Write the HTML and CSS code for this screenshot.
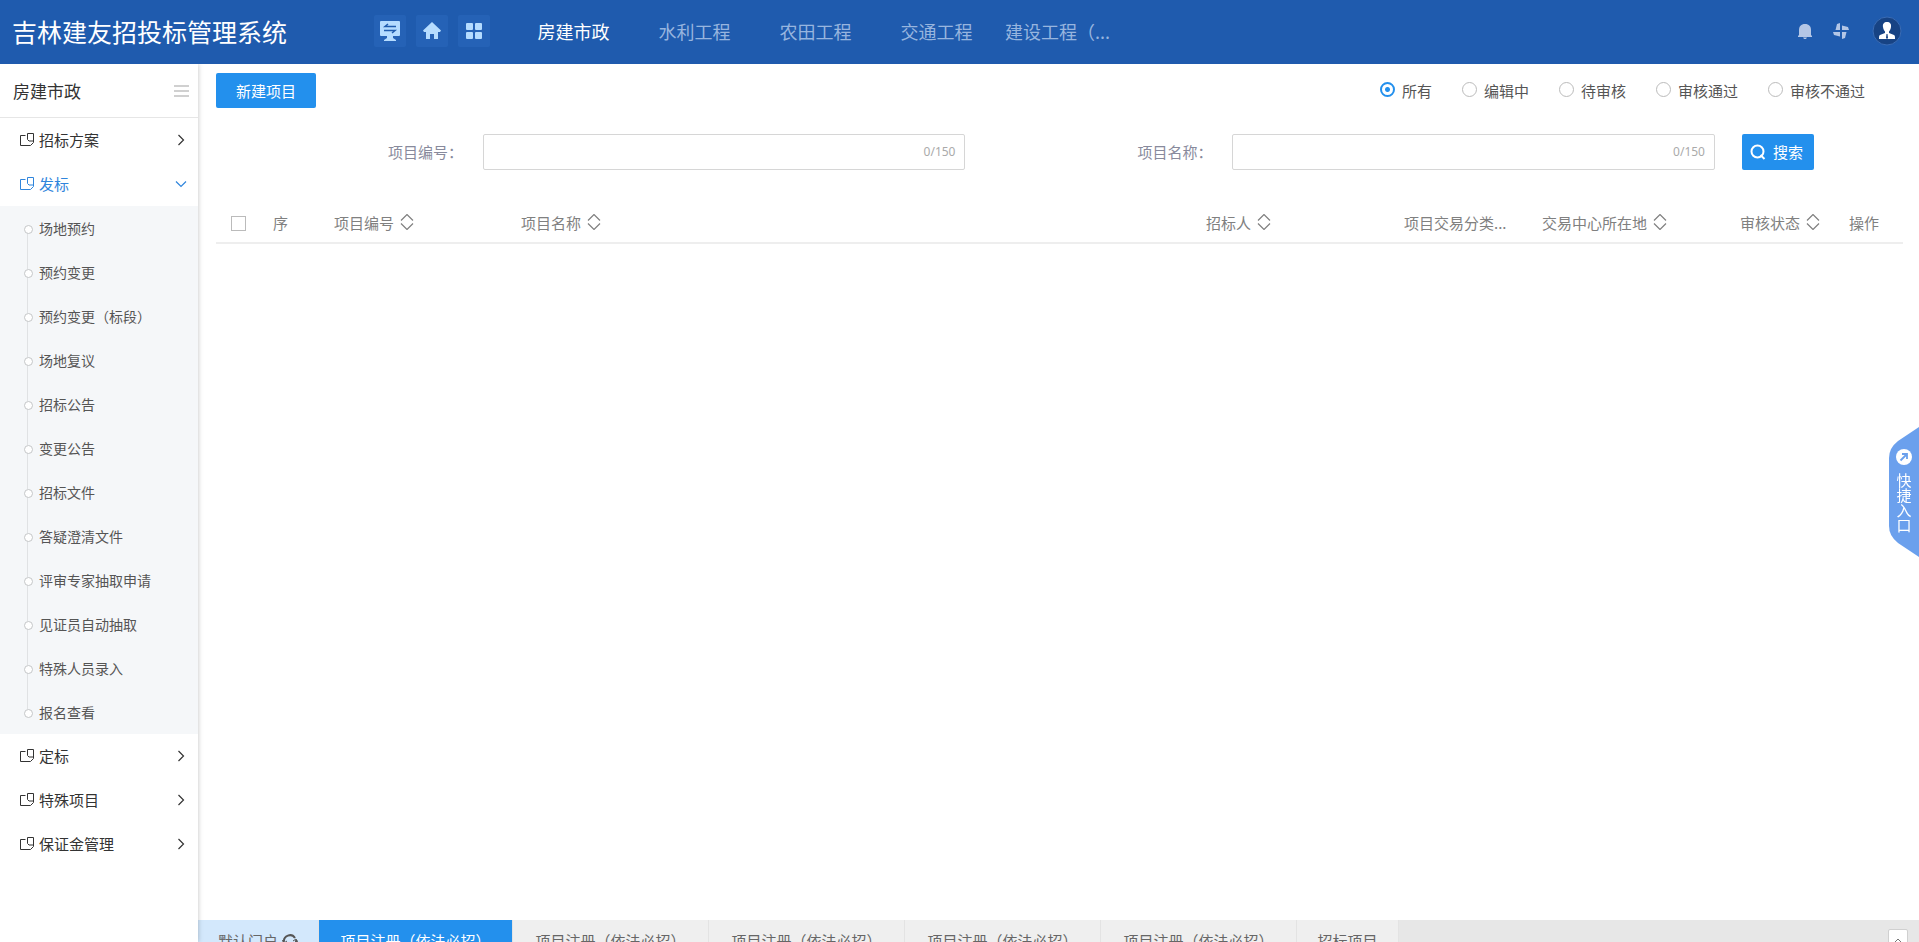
FILE: index.html
```html
<!DOCTYPE html>
<html lang="zh-CN">
<head>
    <meta charset="UTF-8">
    <meta name="viewport" content="width=device-width, initial-scale=1.0">
    <title>吉林建友招投标管理系统</title>
    <link rel="stylesheet" href="styles.css">
</head>
<body>

<!-- Shared icons -->
<svg class="sprite" aria-hidden="true">
    <symbol id="icon-module" viewBox="0 0 14 14">
        <path d="M5.500 2.500h-5v10h10l3-3v-9h-6v6L9 8h4" fill="none" stroke="currentColor"/>
    </symbol>
    <symbol id="icon-right" viewBox="0 0 14 14">
        <path d="M4.500 2l5 5-5 5" fill="none" stroke="currentColor" stroke-width="1.200"/>
    </symbol>
    <symbol id="icon-down" viewBox="0 0 14 14">
        <path d="M2 4.500l5 5 5-5" fill="none" stroke="currentColor" stroke-width="1.200"/>
    </symbol>
    <symbol id="icon-sort" viewBox="0 0 14 16">
        <path d="M1 6.500l6-6 6 6M1 9.500l6 6 6-6" fill="none" stroke="currentColor" stroke-width="1.200"/>
    </symbol>
</svg>

<header class="topbar">
    <h1 class="brand">吉林建友招投标管理系统</h1>
    <div class="quick">
        <button type="button" class="quick-btn" aria-label="桌面">
            <svg width="22" height="20" viewBox="0 0 22 20">
                <path d="M2 0h18a1 1 0 0 1 1 1v13a1 1 0 0 1-1 1H2a1 1 0 0 1-1-1V1a1 1 0 0 1 1-1z" fill="#b5dcff"/>
                <path d="M8 15h6v2l3 2v1H5v-1l3-2z" fill="#b5dcff"/>
                <path d="M17 5.500H6l3-2.500M5 9.500h11L13 12" fill="none" stroke="#1f5bae" stroke-width="1.500"/>
            </svg>
        </button>
        <button type="button" class="quick-btn" aria-label="首页">
            <svg width="18" height="18" viewBox="0 0 18 18">
                <path d="M9 0l9 8.500-1 1.500h-2v7h-4v-5H7v5H3v-7H1L0 8.500z" fill="#b5dcff"/>
            </svg>
        </button>
        <button type="button" class="quick-btn" aria-label="应用">
            <svg width="16" height="16" viewBox="0 0 16 16" fill="#b5dcff">
                <rect width="7" height="7" rx="1"/>
                <rect x="9" width="7" height="7" rx="1"/>
                <rect y="9" width="7" height="7" rx="1"/>
                <rect x="9" y="9" width="7" height="7" rx="1"/>
            </svg>
        </button>
    </div>
    <nav class="topnav">
        <a href="#" class="active">房建市政</a>
        <a href="#">水利工程</a>
        <a href="#">农田工程</a>
        <a href="#">交通工程</a>
        <a href="#">建设工程（...</a>
    </nav>
    <div class="tools">
        <button type="button" class="tool-btn" aria-label="消息">
            <svg width="14" height="15" viewBox="0 0 14 15">
                <path d="M7 0c4 0 6 2.500 6 6v5l1 1v1H0v-1l1-1V6c0-3.500 2-6 6-6zM5 13.500h4L8 15H6z" fill="#b3c6e6"/>
            </svg>
        </button>
        <button type="button" class="tool-btn" aria-label="主题">
            <svg width="16" height="16" viewBox="0 0 16 16" fill="#b3c6e6">
                <path d="M7 0v7H2.500L4 1zM9 2.500L15 4l1 3H9zM9 9h4.500L12 15l-3 1zM0 9h7v4.500L1 12z"/>
            </svg>
        </button>
        <button type="button" class="avatar" aria-label="用户">
            <svg width="30" height="30" viewBox="0 0 30 30">
                <circle cx="15" cy="15" r="14" fill="#174384" stroke="#3a6cb5"/>
                <path d="M15 6c3 0 4.500 2 4 5-.3 2-1.200 3.500-2 4.500v1.500l5 2c1 .5 1 1.500 1 4H7c0-2.500 0-3.500 1-4l5-2v-1.500c-.8-1-1.700-2.500-2-4.500-.5-3 1-5 4-5z" fill="#fff"/>
                <path d="M14.500 18h1l.5 4-1 1-1-1z" fill="#174384"/>
            </svg>
        </button>
    </div>
</header>

<div class="layout">
    <!-- Sidebar -->
    <aside class="sidebar">
        <div class="side-head">
            <h2>房建市政</h2>
            <button type="button" class="collapse" aria-label="收起菜单"><i></i><i></i><i></i></button>
        </div>
        <ul class="menu">
            <li><a href="#" class="menu-link"><svg class="icon"><use href="#icon-module"/></svg><span>招标方案</span><svg class="icon"><use href="#icon-right"/></svg></a></li>
            <li>
                <a href="#" class="menu-link open"><svg class="icon"><use href="#icon-module"/></svg><span>发标</span><svg class="icon"><use href="#icon-down"/></svg></a>
                <ul class="submenu">
                    <li><a href="#">场地预约</a></li>
                    <li><a href="#">预约变更</a></li>
                    <li><a href="#">预约变更（标段）</a></li>
                    <li><a href="#">场地复议</a></li>
                    <li><a href="#">招标公告</a></li>
                    <li><a href="#">变更公告</a></li>
                    <li><a href="#">招标文件</a></li>
                    <li><a href="#">答疑澄清文件</a></li>
                    <li><a href="#">评审专家抽取申请</a></li>
                    <li><a href="#">见证员自动抽取</a></li>
                    <li><a href="#">特殊人员录入</a></li>
                    <li><a href="#">报名查看</a></li>
                </ul>
            </li>
            <li><a href="#" class="menu-link"><svg class="icon"><use href="#icon-module"/></svg><span>定标</span><svg class="icon"><use href="#icon-right"/></svg></a></li>
            <li><a href="#" class="menu-link"><svg class="icon"><use href="#icon-module"/></svg><span>特殊项目</span><svg class="icon"><use href="#icon-right"/></svg></a></li>
            <li><a href="#" class="menu-link"><svg class="icon"><use href="#icon-module"/></svg><span>保证金管理</span><svg class="icon"><use href="#icon-right"/></svg></a></li>
        </ul>
    </aside>

    <div class="workspace">
        <main class="content">
            <div class="toolbar">
                <button type="button" class="btn">新建项目</button>
                <div class="filters">
                    <label><input type="radio" name="status" checked>所有</label>
                    <label><input type="radio" name="status">编辑中</label>
                    <label><input type="radio" name="status">待审核</label>
                    <label><input type="radio" name="status">审核通过</label>
                    <label><input type="radio" name="status">审核不通过</label>
                </div>
            </div>

            <!-- Search -->
            <form class="search">
                <div class="field">
                    <label for="projectNo">项目编号：</label>
                    <div class="box">
                        <input type="text" id="projectNo" maxlength="150">
                        <span>0/150</span>
                    </div>
                </div>
                <div class="field">
                    <label for="projectName">项目名称：</label>
                    <div class="box">
                        <input type="text" id="projectName" maxlength="150">
                        <span>0/150</span>
                    </div>
                </div>
                <button type="button" class="btn btn-search">
                    <svg width="16" height="16" viewBox="0 0 16 16" fill="none" stroke="#fff" stroke-width="2">
                        <circle cx="7.500" cy="7.500" r="6"/>
                        <path d="M10.500 11l4 4"/>
                    </svg>
                    搜索
                </button>
            </form>

            <!-- Project list -->
            <table class="grid">
                <colgroup>
                    <col class="w-check"><col class="w-index"><col class="w-no"><col>
                    <col class="w-owner"><col class="w-type"><col class="w-place"><col class="w-status"><col class="w-action">
                </colgroup>
                <thead>
                    <tr>
                        <th class="check"><input type="checkbox" aria-label="全选"></th>
                        <th>序</th>
                        <th>项目编号<svg class="sort"><use href="#icon-sort"/></svg></th>
                        <th>项目名称<svg class="sort"><use href="#icon-sort"/></svg></th>
                        <th>招标人<svg class="sort"><use href="#icon-sort"/></svg></th>
                        <th>项目交易分类...</th>
                        <th>交易中心所在地<svg class="sort"><use href="#icon-sort"/></svg></th>
                        <th>审核状态<svg class="sort"><use href="#icon-sort"/></svg></th>
                        <th>操作</th>
                    </tr>
                </thead>
                <tbody></tbody>
            </table>
        </main>

        <!-- Opened pages -->
        <nav class="tabs">
            <a href="#" class="tab home">默认门户
                <svg width="16" height="16" viewBox="0 0 16 16" fill="none" stroke="#555" stroke-width="2">
                    <path d="M2 9a6 6 0 0 1 11-4M14 7a6 6 0 0 1-11 4"/>
                    <path d="M0 7l2 3 3-2M16 9l-2-3-3 2" stroke-width="1"/>
                </svg>
            </a>
            <a href="#" class="tab active">项目注册（依法必招）</a>
            <a href="#" class="tab">项目注册（依法必招）</a>
            <a href="#" class="tab">项目注册（依法必招）</a>
            <a href="#" class="tab">项目注册（依法必招）</a>
            <a href="#" class="tab">项目注册（依法必招）</a>
            <a href="#" class="tab short">招标项目</a>
            <button type="button" class="tab-more" aria-label="展开">
                <svg width="10" height="6" viewBox="0 0 10 6"><path d="M1 5l4-4 4 4" fill="none" stroke="#777"/></svg>
            </button>
        </nav>
    </div>
</div>

<!-- Floating shortcut -->
<button type="button" class="shortcut">
    <svg class="shortcut-bg" viewBox="0 0 30 130">
        <path d="M30 0L9 14Q0 21 0 31v68q0 10 9 17l21 14z" fill="#6ba0ed"/>
    </svg>
    <svg class="shortcut-icon" viewBox="0 0 16 16">
        <circle cx="8" cy="8" r="8" fill="#fff"/>
        <path d="M4.500 11.500l6-6M6 5h5v5" fill="none" stroke="#6ba0ed" stroke-width="1.800"/>
    </svg>
    <span>快捷入口</span>
</button>

</body>
</html>
```
FILE: styles.css
```css
* {
    box-sizing: border-box;
}
body {
    margin: 0;
    height: 100vh;
    overflow: hidden;
    background: #fff;
    color: #333;
    font-family: "Noto Sans CJK SC", sans-serif;
    font-size: 15px;
    line-height: 22px;
}
h1, h2 {
    margin: 0;
    font-weight: normal;
}
ul {
    list-style: none;
    margin: 0;
    padding: 0;
}
a {
    color: inherit;
    text-decoration: none;
}
button, input {
    font: inherit;
    margin: 0;
}
button {
    border: none;
    padding: 0;
    background: none;
    cursor: pointer;
}
svg {
    display: block;
    flex: none;
}
.sprite {
    display: none;
}

/* Top bar */
.topbar {
    display: flex;
    align-items: center;
    height: 64px;
    padding: 0 17px 2px 12px;
    background: #1f5bae;
    color: #fff;
}
.brand {
    width: 362px;
    font-size: 25px;
    line-height: 36px;
}
.quick {
    display: flex;
    gap: 10px;
    margin-right: 23px;
}
.quick-btn {
    display: flex;
    align-items: center;
    justify-content: center;
    width: 32px;
    height: 32px;
    border-radius: 2px;
    background: #2562b6;
}
.topnav {
    display: flex;
    font-size: 18px;
}
.topnav a {
    width: 121px;
    text-align: center;
    white-space: nowrap;
    color: #97b5df;
}
.topnav a.active {
    color: #fff;
}
.tools {
    display: flex;
    align-items: center;
    gap: 21px;
    margin-left: auto;
}
.avatar {
    margin-left: 2px;
}

/* Sidebar */
.layout {
    display: flex;
}
.sidebar {
    position: relative;
    width: 198px;
    height: calc(100vh - 64px);
    box-shadow: 0 0 5px rgba(0,0,0,0.25);
    clip-path: inset(0 -6px 0 0);
}
.side-head {
    display: flex;
    align-items: center;
    justify-content: space-between;
    height: 54px;
    padding: 0 9px 0 13px;
    border-bottom: 1px solid #e6e6e6;
}
.side-head h2 {
    font-size: 17px;
}
.collapse {
    display: grid;
    gap: 3px;
}
.collapse i {
    width: 15px;
    height: 2px;
    background: #d0d0d0;
}
.menu-link {
    display: flex;
    align-items: center;
    height: 44px;
    padding: 0 10px 0 20px;
}
.menu-link span {
    flex: 1;
    margin-left: 5px;
}
.menu-link.open {
    color: #2f85dc;
}
.icon {
    width: 14px;
    height: 14px;
}
.submenu {
    background: #f5f7f9;
    color: #555;
    font-size: 14px;
}
.submenu li {
    position: relative;
}
.submenu a {
    display: flex;
    align-items: center;
    height: 44px;
    padding-left: 39px;
}
.submenu li::before {
    content: "";
    position: absolute;
    left: 27px;
    top: 26px;
    width: 1px;
    height: 37px;
    background: #e0e2e4;
}
.submenu li:last-child::before {
    display: none;
}
.submenu a::before {
    content: "";
    position: absolute;
    left: 24px;
    top: 19px;
    width: 7px;
    height: 7px;
    border: 1px solid #c4c6c8;
    border-radius: 50%;
    background: #fff;
}

/* Content */
.workspace {
    flex: 1;
    min-width: 0;
}
.content {
    height: calc(100vh - 86px);
    padding: 9px 16px 0 18px;
}
.toolbar {
    display: flex;
    justify-content: space-between;
    align-items: center;
    padding-right: 38px;
}
.btn {
    height: 35px;
    padding: 0 20px;
    border-radius: 2px;
    background: #2390ed;
    color: #fff;
}
.filters {
    display: flex;
    gap: 30px;
}
.filters label {
    display: flex;
    align-items: center;
    gap: 7px;
    color: #555;
}
.filters input {
    appearance: none;
    width: 15px;
    height: 15px;
    margin-bottom: 3px;
    border: 1px solid #bbb;
    border-radius: 50%;
}
.filters input:checked {
    border: 2px solid #2390ed;
    background: radial-gradient(#2390ed 2px, #fff 3px);
}
.search {
    display: grid;
    grid-template-columns: 1fr 1fr auto;
    margin: 26px 89px 0 0;
}
.field {
    display: flex;
    align-items: center;
}
.field label {
    width: 267px;
    padding-right: 20px;
    text-align: right;
    color: #888a9c;
}
.box {
    display: flex;
    flex: 1;
    align-items: center;
    height: 36px;
    padding: 0 9px;
    border: 1px solid #d6d6d6;
    border-radius: 2px;
}
.box input {
    flex: 1;
    min-width: 0;
    border: none;
    outline: none;
}
.box span {
    color: #aaa;
    font-family: "Noto Sans", sans-serif;
    font-size: 12px;
}
.btn-search {
    display: flex;
    align-items: center;
    gap: 7px;
    height: 36px;
    margin-left: 27px;
    padding: 0 11px 0 8px;
}
.grid {
    width: 100%;
    margin-top: 34px;
    table-layout: fixed;
    border-collapse: collapse;
}
.grid th {
    height: 39px;
    padding: 0;
    border-bottom: 2px solid #eee;
    font-weight: normal;
    text-align: left;
    white-space: nowrap;
    color: #808080;
}
.grid .check {
    padding-left: 15px;
}
.grid input {
    display: block;
    appearance: none;
    width: 15px;
    height: 15px;
    border: 1px solid #bbb;
}
.sort {
    display: inline-block;
    width: 14px;
    height: 16px;
    margin-left: 6px;
    vertical-align: -1px;
}
.w-check { width: 57px; }
.w-index { width: 61px; }
.w-no { width: 187px; }
.w-owner { width: 198px; }
.w-type { width: 138px; }
.w-place { width: 198px; }
.w-status { width: 109px; }
.w-action { width: 54px; }

/* Opened pages */
.tabs {
    display: flex;
    height: 42px;
    background: #e7e7e7;
    color: #666;
}
.tab {
    display: flex;
    align-items: center;
    justify-content: center;
    gap: 4px;
    width: 196px;
    border-right: 1px solid #e3e3e3;
    background: #efefef;
}
.tab.home {
    width: 121px;
    background: #d3e8fc;
}
.tab.active {
    width: 194px;
    background: #2390ed;
    color: #fff;
}
.tab.short {
    width: 102px;
}
.tab-more {
    display: flex;
    align-items: center;
    justify-content: center;
    width: 20px;
    height: 24px;
    margin: 9px 11px 0 auto;
    border: 1px solid #d0d0d0;
    border-radius: 2px;
    background: #fff;
}

/* Floating shortcut */
.shortcut {
    position: fixed;
    right: 0;
    top: 427px;
    display: flex;
    flex-direction: column;
    align-items: center;
    gap: 7px;
    width: 30px;
    height: 130px;
    padding-top: 22px;
    color: #fff;
    line-height: 15px;
}
.shortcut-bg {
    position: absolute;
    inset: 0;
}
.shortcut-icon {
    position: relative;
    width: 16px;
    height: 16px;
}
.shortcut span {
    position: relative;
    width: 15px;
}
```
